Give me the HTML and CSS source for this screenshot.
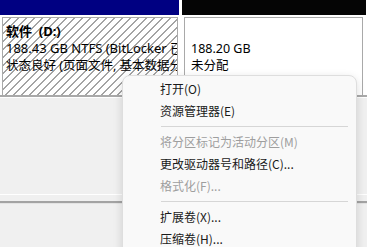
FILE: index.html
```html
<!DOCTYPE html>
<html lang="zh-CN">
<head>
<meta charset="utf-8">
<title>磁盘管理</title>
<link rel="stylesheet" href="styles.css">
</head>
<body>
<div class="disk">
  <div class="vols">
    <div class="vol vol-primary">
      <div class="strip strip-navy"></div>
      <div class="vbody hatched">
        <div class="line bold">软件&nbsp;&nbsp;(D:)</div>
        <div class="line">188.43 GB NTFS (BitLocker 已加密)</div>
        <div class="line status">状态良好 (页面文件, 基本数据分区)</div>
      </div>
    </div>
    <div class="vol vol-free">
      <div class="strip strip-black"></div>
      <div class="vbody plain">
        <div class="line">&nbsp;</div>
        <div class="line">188.20 GB</div>
        <div class="line status">未分配</div>
      </div>
    </div>
  </div>
  <div class="disk-bottom"></div>
</div>
<div class="gap"></div>
<div class="rule-light"></div>
<div class="gap2"></div>
<div class="rule-dark"></div>

<div class="menu">
  <div class="item">打开(O)</div>
  <div class="item">资源管理器(E)</div>
  <div class="sep"></div>
  <div class="item disabled">将分区标记为活动分区(M)</div>
  <div class="item">更改驱动器号和路径(C)...</div>
  <div class="item disabled">格式化(F)...</div>
  <div class="sep"></div>
  <div class="item">扩展卷(X)...</div>
  <div class="item">压缩卷(H)...</div>
</div>
</body>
</html>
```

FILE: styles.css
```css
html, body {
  margin: 0;
  padding: 0;
}
body {
  width: 367px;
  height: 247px;
  overflow: hidden;
  background: #f0f0f0;
  font-family: "Noto Sans", "Noto Sans CJK SC", sans-serif;
  font-size: 12px;
  color: #000;
  position: relative;
}
.disk {
  background: #fff;
}
.vols {
  display: flex;
  height: 95px;
}
.vol {
  display: flex;
  flex-direction: column;
}
.vol-primary {
  width: 179px;
  margin-right: 3px;
}
.vol-free {
  width: 184px;
}
.strip {
  height: 15px;
  flex: none;
}
.strip-navy { background: #000082; }
.strip-black { background: #050505; }
.vbody {
  flex: 1;
  margin-top: 2px;
  border: 1px solid #a9a9a9;
  border-bottom: none;
  padding: 5px 0 0 3px;
  overflow: hidden;
  white-space: nowrap;
  font-size: 13px;
}
.vol-primary .vbody {
  margin-left: 2px;
  margin-right: 1px;
}
.vol-free .vbody {
  margin-left: 2px;
  margin-right: 3px;
  padding-left: 6px;
  font-size: 12.5px;
}
.hatched {
  background: repeating-linear-gradient(135deg, #ffffff 0, #ffffff 4.6px, #a4a4a4 4.6px, #a4a4a4 5.66px);
}
.plain {
  background: #fff;
}
.line {
  line-height: 17px;
  height: 17px;
}
.vbody .status {
  font-size: 12.5px;
}
.bold {
  font-weight: bold;
}
.disk-bottom {
  height: 2px;
  background: #a9a9a9;
  border-bottom: 1px solid #fff;
}
.gap {
  height: 96px;
}
.rule-light {
  height: 1px;
  background: #fff;
}
.gap2 {
  height: 6px;
}
.rule-dark {
  height: 2px;
  background: #a3a3a3;
  border-bottom: 1px solid #e3e3e3;
}
.menu {
  position: absolute;
  left: 122px;
  top: 75px;
  width: 233px;
  height: 200px;
  background: #f9f9f9;
  border: 1px solid #dedede;
  border-radius: 8px;
  box-shadow: 0 3px 10px rgba(0, 0, 0, 0.14);
  padding-top: 2px;
  font-family: "Noto Sans CJK SC", sans-serif;
}
.item {
  height: 22px;
  line-height: 22px;
  padding-left: 37px;
  color: #1a1a1a;
  white-space: nowrap;
}
.item.disabled {
  color: #9e9e9e;
}
.sep {
  height: 1px;
  margin: 4px 8px 4px 38px;
  background: #d6d6d6;
}
```
